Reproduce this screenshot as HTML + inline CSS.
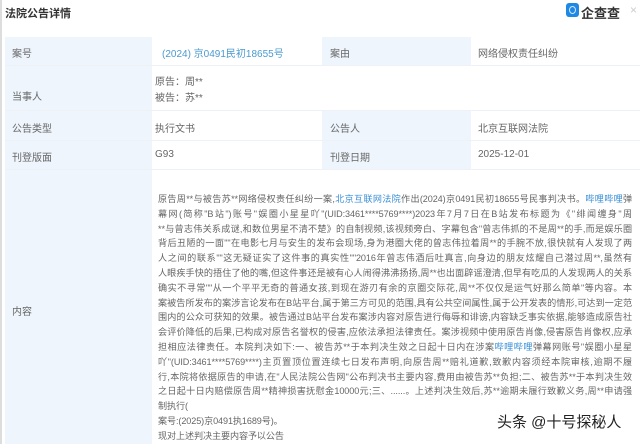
<!DOCTYPE html>
<html><head><meta charset="utf-8"><style>
*{margin:0;padding:0;box-sizing:border-box}
body{width:640px;height:444px;overflow:hidden;background:#fff;font-family:"Liberation Sans","Noto Sans CJK SC",sans-serif;color:#555;position:relative}
.a{position:absolute;white-space:nowrap}
.lb{position:absolute;background:#eef5fd}
.t{font-size:10px;color:#666}
.c div{width:474px;height:14.8px;line-height:14.8px;font-size:9.1px;color:#666;white-space:nowrap;overflow:hidden;text-align:justify;text-align-last:justify;letter-spacing:-0.1px}
.c div.s{text-align-last:left}
.bl{color:#3a8fd8}
</style></head><body>
<div class="a" style="left:0;top:0;width:2px;height:444px;background:#ddd"></div>
<div class="a" style="left:5px;top:5px;font-size:11px;font-weight:bold;color:#333">法院公告详情</div>
<div class="a" style="left:566px;top:3px;width:13px;height:14px;border-radius:3px;background:#1e88e5"></div>
<div class="a" style="left:569px;top:6px;width:7px;height:8px;border:1.5px solid #cfe8ff;border-radius:50%"></div>
<div class="a" style="left:581px;top:3px;font-size:13px;font-weight:bold;color:#333">企查查</div>
<div class="a" style="left:630px;top:3px;font-size:12px;color:#ccc">×</div>

<div class="lb" style="left:5px;top:37px;width:147px;height:407px"></div>
<div class="lb" style="left:322px;top:37px;width:149px;height:28px"></div>
<div class="lb" style="left:322px;top:110px;width:149px;height:59px"></div>
<div class="a" style="left:5px;top:65px;width:635px;height:1px;background:#eef1f5"></div>
<div class="a" style="left:5px;top:110px;width:635px;height:1px;background:#eef1f5"></div>
<div class="a" style="left:5px;top:140px;width:635px;height:1px;background:#eef1f5"></div>
<div class="a" style="left:5px;top:169px;width:635px;height:1px;background:#eef1f5"></div>

<div class="a t" style="left:12px;top:45px">案号</div>
<div class="a t bl" style="left:162px;top:45px;color:#4a9bd0">(2024) 京0491民初18655号</div>
<div class="a t" style="left:330px;top:45px">案由</div>
<div class="a t" style="left:478px;top:45px">网络侵权责任纠纷</div>
<div class="a t" style="left:12px;top:88px">当事人</div>
<div class="a t" style="left:155px;top:73px">原告：周**</div>
<div class="a t" style="left:155px;top:89px">被告：苏**</div>
<div class="a t" style="left:12px;top:120px">公告类型</div>
<div class="a t" style="left:155px;top:120px">执行文书</div>
<div class="a t" style="left:330px;top:120px">公告人</div>
<div class="a t" style="left:478px;top:120px">北京互联网法院</div>
<div class="a t" style="left:12px;top:149px">刊登版面</div>
<div class="a t" style="left:155px;top:149px">G93</div>
<div class="a t" style="left:330px;top:149px">刊登日期</div>
<div class="a t" style="left:478px;top:149px">2025-12-01</div>
<div class="a t" style="left:12px;top:303px">内容</div>

<div class="a c" style="left:158px;top:192px">
<div>原告周**与被告苏**网络侵权责任纠纷一案,<span class="bl">北京互联网法院</span>作出(2024)京0491民初18655号民事判决书。<span class="bl">哔哩哔哩</span>弹</div>
<div>幕网(简称"B站")账号"娱圈小星星吖"(UID:3461****5769****)2023年7月7日在B站发布标题为《"绯闻缠身"周</div>
<div>**与曾志伟关系成谜,和数位男星不清不楚》的自制视频,该视频旁白、字幕包含"曾志伟抓的不是周**的手,而是娱乐圈</div>
<div>背后丑陋的一面""在电影七月与安生的发布会现场,身为港圈大佬的曾志伟拉着周**的手腕不放,很快就有人发现了两</div>
<div>人之间的联系""这无疑证实了这件事的真实性""2016年曾志伟酒后吐真言,向身边的朋友炫耀自己潜过周**,虽然有</div>
<div>人眼疾手快的捂住了他的嘴,但这件事还是被有心人闹得沸沸扬扬,周**也出面辟谣澄清,但早有吃瓜的人发现两人的关系</div>
<div>确实不寻常""从一个平平无奇的普通女孩,到现在游刃有余的京圈交际花,周**不仅仅是运气好那么简单"等内容。本</div>
<div>案被告所发布的案涉言论发布在B站平台,属于第三方可见的范围,具有公共空间属性,属于公开发表的情形,可达到一定范</div>
<div>围内的公众可获知的效果。被告通过B站平台发布案涉内容对原告进行侮辱和诽谤,内容缺乏事实依据,能够造成原告社</div>
<div>会评价降低的后果,已构成对原告名誉权的侵害,应依法承担法律责任。案涉视频中使用原告肖像,侵害原告肖像权,应承</div>
<div>担相应法律责任。本院判决如下:一、被告苏**于本判决生效之日起十日内在涉案<span class="bl">哔哩哔哩</span>弹幕网账号"娱圈小星星</div>
<div>吖"(UID:3461****5769****)主页置顶位置连续七日发布声明,向原告周**赔礼道歉,致歉内容须经本院审核,逾期不履</div>
<div>行,本院将依据原告的申请,在"人民法院公告网"公布判决书主要内容,费用由被告苏**负担;二、被告苏**于本判决生效</div>
<div>之日起十日内赔偿原告周**精神损害抚慰金10000元;三、......。上述判决生效后,苏**逾期未履行致歉义务,周**申请强</div>
<div class="s">制执行(</div>
<div class="s">案号:(2025)京0491执1689号)。</div>
<div class="s">现对上述判决主要内容予以公告</div>
</div>
<div class="a" style="left:497px;top:411px;font-size:15px;color:#222;text-shadow:0 0 2px #fff,0 0 2px #fff">头条 @十号探秘人</div>
</body></html>
